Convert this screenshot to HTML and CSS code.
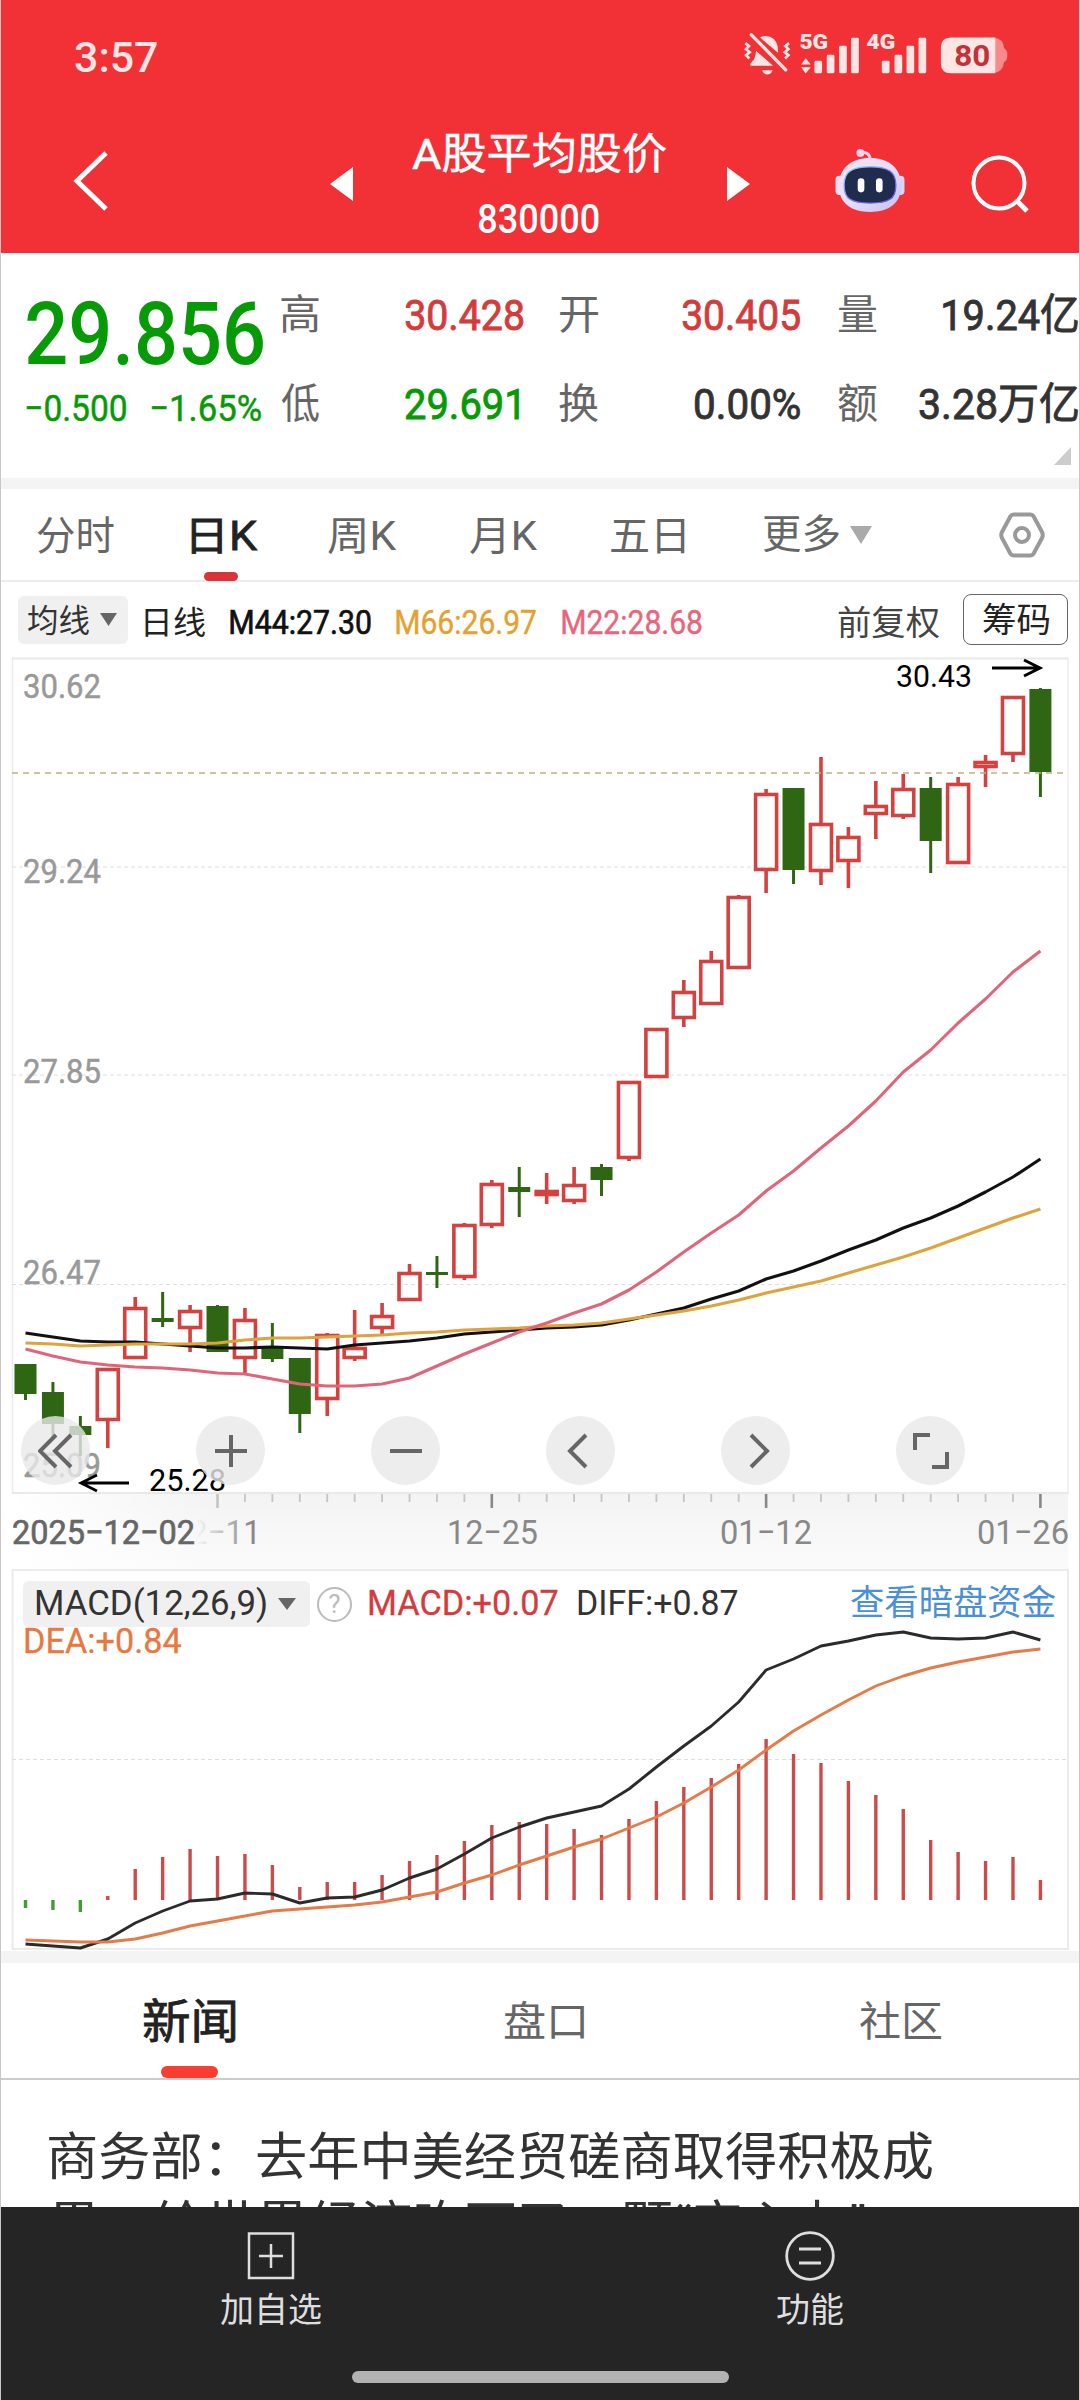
FILE: index.html
```html
<!DOCTYPE html>
<html lang="zh-CN">
<head>
<meta charset="utf-8">
<title>A股平均股价 830000</title>
<link rel="stylesheet" href="styles.css">
</head>
<body>
<div class="screen">
  <header class="header">
    <div class="status">
      <span class="clock fit" data-w="82">3:57</span>
      <svg class="status-icons" viewBox="70 30 800 140" width="267" height="47">
        <g fill="#ffe6e4">
          <path d="M106 118 Q112 106 112 92 L163 137 L98 137 Q93 137 95 131 Z"/>
          <path d="M124 52 Q138 44 154 50 Q178 60 178 92 L178 98 Z"/>
          <path d="M130 150 h32 q-6 13-16 13 t-16-13z"/>
        </g>
        <g fill="none" stroke="#ffe6e4" stroke-width="8">
          <path d="M98 44 L201 149" stroke-width="10" stroke-linecap="round"/>
          <path d="M80 69 l11 9 -9 9 11 9 -11 9 10 10M211 69 l-11 9 9 9 -11 9 11 9 -10 10"/>
        </g>
        <g fill="#ffe6e4">
          <text x="242" y="88" class="net" textLength="86" lengthAdjust="spacingAndGlyphs">5G</text>
          <text x="443" y="88" class="net" textLength="86" lengthAdjust="spacingAndGlyphs">4G</text>
          <path d="M247 133 L261 114 L276 133ZM247 141 L261 160 L276 141Z"/>
          <rect x="287" y="122" width="23" height="37" rx="4"/><rect x="324" y="104" width="23" height="55" rx="4"/>
          <rect x="361" y="77" width="23" height="82" rx="4"/><rect x="397" y="53" width="23" height="106" rx="4"/>
          <rect x="489" y="122" width="23" height="37" rx="4"/><rect x="527" y="104" width="23" height="55" rx="4"/>
          <rect x="563" y="77" width="23" height="82" rx="4"/><rect x="599" y="53" width="23" height="106" rx="4"/>
        </g>
        <path d="M822 52 Q853 54 855 84 Q865 88 865 105 Q865 122 855 126 Q851 158 822 159Z" fill="#f88a8a"/>
        <path d="M696 52 H829 V159 H696 Q666 159 666 129 V82 Q666 52 696 52Z" fill="#ffe6e4"/>
        <text x="706" y="137" class="batt" textLength="108" lengthAdjust="spacingAndGlyphs">80</text>
      </svg>
    </div>
    <div class="titlebar">
      <svg class="back" viewBox="0 0 38 64" width="38" height="64"><path d="M34 4 L5 32 L34 60" fill="none" stroke="#fff" stroke-width="5"/></svg>
      <svg class="prev" viewBox="0 0 23 34" width="23" height="34"><path d="M23 0V34L0 17Z" fill="#fff"/></svg>
      <div class="title">
        <span class="name fit" data-w="254">A股平均股价</span>
        <span class="code fit" data-w="120">830000</span>
      </div>
      <svg class="next" viewBox="0 0 23 34" width="23" height="34"><path d="M0 0V34L23 17Z" fill="#fff"/></svg>
      <svg class="robot" viewBox="345 386 210 196" width="70" height="65">
        <defs>
          <linearGradient id="shell" x1="0" y1="0" x2="1" y2="1"><stop offset="0" stop-color="#f3e4f4"/><stop offset=".5" stop-color="#e6defa"/><stop offset="1" stop-color="#c3c0f0"/></linearGradient>
          <linearGradient id="rim" x1="0" y1="0" x2="1" y2="1"><stop offset="0" stop-color="#7fe0ee"/><stop offset=".5" stop-color="#8478ee"/><stop offset="1" stop-color="#5c4fd8"/></linearGradient>
        </defs>
        <path d="M424 400 Q449 396 451 422" fill="none" stroke="#f6d3ea" stroke-width="9"/>
        <circle cx="421" cy="401" r="12" fill="#f6d3ea"/>
        <rect x="346" y="470" width="24" height="58" rx="12" fill="#efdff3"/><rect x="530" y="470" width="24" height="58" rx="12" fill="#d9d3f6"/>
        <path d="M450 416 C508 416 544 448 544 500 C544 552 508 579 450 579 C392 579 356 552 356 500 C356 448 392 416 450 416Z" fill="url(#shell)"/>
        <path d="M450 443 C506 443 528 458 528 498 C528 540 506 552 450 552 C394 552 372 540 372 498 C372 458 394 443 450 443Z" fill="#1f2c4d" stroke="url(#rim)" stroke-width="4"/>
        <rect x="413" y="477" width="20" height="43" rx="10" fill="#fff"/><rect x="468" y="477" width="20" height="43" rx="10" fill="#fff"/>
      </svg>
      <svg class="search" viewBox="0 0 58 58" width="58" height="58" fill="none" stroke="#fff" stroke-width="4"><circle cx="28" cy="28" r="25.5"/><path d="M45 45L56 56" stroke-width="5"/></svg>
    </div>
  </header>

  <section class="quote">
    <div class="last">
      <span class="price fit" data-w="236">29.856</span>
      <div class="change"><span class="fit" data-w="99">−0.500</span><span class="fit" data-w="109">−1.65%</span></div>
    </div>
    <div class="stats">
      <span class="lab fit" data-w="38">高</span><span class="val up fit" data-w="117">30.428</span>
      <span class="lab fit" data-w="38">开</span><span class="val up fit" data-w="117">30.405</span>
      <span class="lab fit" data-w="39">量</span><span class="val fit" data-w="135">19.24亿</span>
      <span class="lab fit" data-w="38">低</span><span class="val down low fit" data-w="114">29.691</span>
      <span class="lab fit" data-w="39">换</span><span class="val fit" data-w="105">0.00%</span>
      <span class="lab fit" data-w="39">额</span><span class="val fit" data-w="158">3.28万亿</span>
    </div>
    <i class="corner"></i>
  </section>

  <nav class="periods">
    <span class="fit" data-w="77">分时</span>
    <span class="active"><span class="fit" data-w="66">日K</span></span>
    <span class="fit" data-w="69">周K</span>
    <span class="fit" data-w="68">月K</span>
    <span class="fit" data-w="74">五日</span>
    <span class="more"><span class="fit" data-w="76">更多</span><svg viewBox="0 0 22 18" width="22" height="18"><path d="M0 0H22L11 18Z" fill="#aaa"/></svg></span>
    <svg class="gear" viewBox="0 0 46 46" width="46" height="46" fill="none" stroke="#999" stroke-width="4"><path d="M15 2.500H31Q33.500 2.500 34.700 4.500L43 20Q44.500 23 43 26L34.700 41.500Q33.500 43.500 31 43.500H15Q12.500 43.500 11.300 41.500L3 26Q1.500 23 3 20L11.300 4.500Q12.500 2.500 15 2.500Z"/><circle cx="23" cy="23" r="7"/></svg>
  </nav>

  <div class="legend">
    <span class="pill"><span class="fit" data-w="61">均线</span><svg viewBox="0 0 17 13" width="17" height="13"><path d="M0 0H17L8.500 13Z" fill="#666"/></svg></span>
    <span class="cjk dark fit" data-w="60">日线</span>
    <span class="m44 fit" data-w="141">M44:27.30</span>
    <span class="m66 fit" data-w="140">M66:26.97</span>
    <span class="m22 fit" data-w="140">M22:28.68</span>
    <span class="cjk adj fit" data-w="101">前复权</span>
    <span class="chip"><span class="fit" data-w="66">筹码</span></span>
  </div>

  <section class="kline">
    <svg id="kline" viewBox="0 657 1080 912" width="1080" height="912"></svg>
    <div class="tools">
      <button><svg viewBox="0 0 36 36"><path d="M18 2L2 18L18 34M33 2L17 18L33 34"/></svg></button>
      <button><svg viewBox="0 0 36 36"><path d="M18 2V34M2 18H34"/></svg></button>
      <button><svg viewBox="0 0 36 36"><path d="M2 18H34"/></svg></button>
      <button><svg viewBox="0 0 36 36"><path d="M23 2L7 18L23 34"/></svg></button>
      <button><svg viewBox="0 0 36 36"><path d="M13 2L29 18L13 34"/></svg></button>
      <button><svg viewBox="0 0 36 36"><path d="M2 17V2H17M34 19V34H19"/></svg></button>
    </div>
  </section>

  <section class="macd">
    <svg id="macd" viewBox="0 1569 1080 382" width="1080" height="382"></svg>
    <div class="macd-head">
      <span class="pill"><span class="fit" data-w="230">MACD(12,26,9)</span><svg viewBox="0 0 18 12" width="18" height="12"><path d="M0 0H18L9 12Z" fill="#666"/></svg></span>
      <span class="help">?</span>
      <span class="v-macd fit" data-w="189">MACD:+0.07</span>
      <span class="v-diff fit" data-w="160">DIFF:+0.87</span>
      <span class="link fit" data-w="205">查看暗盘资金</span>
    </div>
    <span class="v-dea fit" data-w="156">DEA:+0.84</span>
  </section>

  <nav class="sections">
    <span class="on"><span class="fit" data-w="92">新闻</span></span>
    <span><span class="fit" data-w="80">盘口</span></span>
    <span><span class="fit" data-w="82">社区</span></span>
  </nav>

  <article class="news">
    <p><span class="fit" data-w="883">商务部：去年中美经贸磋商取得积极成</span></p>
    <p><span class="fit" data-w="816">果，给世界经济吃下了一颗“定心丸”</span></p>
  </article>

  <footer class="dock">
    <div class="actions">
      <a><svg viewBox="0 0 50 50" width="50" height="50" fill="none" stroke="#dedede" stroke-width="2.500"><rect x="3" y="2.500" width="44" height="44.500"/><path d="M25 13V37M13 25H37"/></svg><span class="fit" data-w="101">加自选</span></a>
      <a><svg viewBox="0 0 50 50" width="50" height="50" fill="none" stroke="#dedede" stroke-width="2.800"><circle cx="25" cy="25" r="23.300"/><path d="M14 18H36M14 32H36"/></svg><span class="fit" data-w="66">功能</span></a>
    </div>
    <i class="home"></i>
  </footer>
</div>
<script src="app.js"></script>
</body>
</html>
```
FILE: styles.css
```css
* { box-sizing: border-box; }
body { margin: 0; background: #fff; font-family: Roboto, "Noto Sans CJK SC", sans-serif; color: #333; }
svg { display: block; flex: none; }
.screen { width: 1080px; height: 2400px; overflow: hidden; display: flex; flex-direction: column; border-left: 1px solid #c8c8c8; border-right: 1px solid #c8c8c8; }
.screen > * { margin-left: -1px; margin-right: -1px; flex: none; }
.fit { display: block; white-space: nowrap; flex: none; }
.fit > span { display: inline-block; transform-origin: 0 50%; }

.header { height: 253px; background: #f13135; color: #fff; }
.status { height: 114px; padding: 0 71px 0 75px; display: flex; align-items: center; justify-content: space-between; }
.clock { font-size: 43px; font-weight: 500; line-height: 50px; color: #ffe6e4; }
.status-icons { margin-top: -7px; }
.net { font: 900 61px Roboto, sans-serif; }
.batt { font: 700 87px Roboto, sans-serif; fill: #c23238; }
.titlebar { height: 139px; display: flex; align-items: flex-start; }
.back { margin: 35px 0 0 72px; }
.prev { margin: 53px 0 0 220px; }
.title { width: 254px; margin: 12px 0 0 59px; display: flex; flex-direction: column; align-items: center; }
.name { font-size: 43px; line-height: 56px; -webkit-text-stroke: .5px; }
.code { font-size: 41px; line-height: 50px; font-weight: 500; margin-top: 12px; }
.next { margin: 53px 0 0 61px; }
.robot { margin: 34px 0 0 85px; }
.search { margin: 41px 0 0 66px; }

.quote { height: 225px; display: flex; position: relative; }
.last { width: 281px; padding: 35px 0 0 27px; color: #069a06; }
.price { font-size: 87px; line-height: 92px; font-weight: 500; }
.change { display: flex; gap: 26px; margin-top: 9px; font-size: 37px; line-height: 40px; -webkit-text-stroke: .5px; }
.stats { flex: 1; height: 180px; padding: 17px 2px 0 0; display: grid; grid-template-columns: 38px 204px 75px 202px 77px 1fr; grid-auto-rows: 89px; align-items: center; }
.lab { font-size: 41px; line-height: 44px; color: #666; justify-self: end; }
.val { font-size: 43px; line-height: 46px; justify-self: end; -webkit-text-stroke: .9px; }
.low { margin-right: 4px; }
.up { color: #d43c3c; }
.down { color: #069a06; }
.corner { position: absolute; right: 9px; top: 194px; border-left: 17px solid transparent; border-bottom: 18px solid #ccc; }

.periods { height: 104px; border-top: 11px solid #f4f4f4; border-bottom: 2px solid #ececec; display: grid; grid-template-columns: 155px 136px 142px 141px 152px 236px 1fr; padding-left: 37px; align-items: center; font-size: 40px; line-height: 95px; color: #666; }
.periods > * { max-height: 91px; }
.active { position: relative; height: 91px; color: #222; -webkit-text-stroke: .8px; }
.active::after { content: ""; position: absolute; left: 12px; bottom: -1px; width: 34px; height: 9px; border-radius: 5px; background: #db3438; }
.more { display: flex; align-items: center; gap: 11px; }

.legend { height: 75px; display: flex; align-items: center; padding: 0 12px 0 18px; font-size: 34px; line-height: 48px; }
.pill { background: #f0f0f0; border-radius: 6px; display: flex; align-items: center; color: #333; }
.legend .pill { width: 110px; height: 48px; padding-left: 10px; gap: 11px; font-size: 32px; }
.legend .pill .fit { position: relative; top: 1px; }
.legend > .cjk { font-size: 32px; margin-top: 6px; }
.legend > .dark { color: #222; margin-left: 17px; }
.m44 { margin: 4px 0 0 25px; color: #111; -webkit-text-stroke: .7px; }
.m66 { margin: 4px 0 0 25px; color: #e3a22f; -webkit-text-stroke: .4px; }
.m22 { margin: 4px 0 0 26px; color: #e8657b; -webkit-text-stroke: .4px; }
.legend > .adj { margin-left: auto; font-size: 34px; color: #444; }
.chip { width: 105px; height: 51px; margin-left: 24px; border: 1.500px solid #666; border-radius: 8px; display: flex; justify-content: center; align-items: center; font-size: 34px; color: #222; }

.kline { height: 912px; position: relative; }
.tools { position: absolute; left: 21px; top: 759px; display: flex; gap: 106px; }
.tools button { width: 69px; height: 69px; padding: 0; border: 0; border-radius: 50%; background: rgba(232,232,232,.8); display: grid; place-items: center; }
.tools svg { width: 36px; height: 36px; fill: none; stroke: #666; stroke-width: 4; }

.macd { height: 382px; position: relative; padding-top: 12px; }
.macd > svg { position: absolute; left: 0; top: 0; }
.macd-head { position: relative; height: 46px; display: flex; align-items: center; padding: 0 24px 0 23px; font-size: 35px; line-height: 46px; }
.macd .pill { width: 287px; height: 46px; padding-left: 13px; gap: 12px; }
.help { width: 35px; height: 35px; margin-left: 7px; border: 2.500px solid #bbb; border-radius: 50%; font-size: 26px; line-height: 31px; text-align: center; color: #bbb; }
.v-macd { margin-left: 17px; color: #d43c3c; -webkit-text-stroke: .3px; }
.v-diff { margin-left: 20px; color: #333; }
.link { margin-left: auto; font-size: 35px; color: #4a90d9; }
.v-dea { position: relative; margin: -8px 0 0 25px; font-size: 35px; line-height: 46px; color: #e8783f; -webkit-text-stroke: .3px; }

.sections { height: 129px; border-top: 12px solid #f4f4f4; border-bottom: 2px solid #ccc; display: grid; grid-template-columns: 378px 332px 1fr; font-size: 41px; line-height: 118px; color: #666; }
.sections > span { display: flex; justify-content: center; height: 115px; }
.sections > span:last-child { padding-left: 12px; }
.on { position: relative; color: #222; font-size: 47px; -webkit-text-stroke: .8px; }
.on::after { content: ""; position: absolute; left: 161px; bottom: 0; width: 57px; height: 12px; border-radius: 6px; background: #f93d32; }

.news { height: 127px; overflow: hidden; padding: 44px 0 0 49px; font-size: 51px; line-height: 68px; }
.news p { margin: 0; }

.dock { height: 193px; background: #252525; color: #dedede; display: flex; flex-direction: column; align-items: center; }
.actions { width: 1078px; height: 164px; display: grid; grid-template-columns: 1fr 1fr; }
.actions a { display: flex; flex-direction: column; align-items: center; padding-top: 24px; gap: 8px; font-size: 34px; line-height: 42px; }
.home { width: 377px; height: 12px; border-radius: 6px; background: #b2b2b2; }

.axis { font: 400 34px Roboto, sans-serif; fill: #999; stroke: #999; stroke-width: .5; }
.peak { font: 400 31px Roboto, sans-serif; fill: #000; }
.date { font: 400 34px Roboto, sans-serif; fill: #888; }
.date.first { fill: #666; stroke: #666; stroke-width: .7; }
```
FILE: app.js
```js
// Condense each numeral or label to its measured width, as the app's DIN face does.
const pen = document.createElement('canvas').getContext('2d');
document.querySelectorAll('.fit').forEach(el => {
  const text = el.textContent, cs = getComputedStyle(el), w = +el.dataset.w;
  pen.font = `${cs.fontWeight} ${cs.fontSize} ${cs.fontFamily}`;
  const m = pen.measureText(text);
  const k = w / (m.actualBoundingBoxLeft + m.actualBoundingBoxRight);
  el.innerHTML = '';
  const inner = document.createElement('span');
  inner.textContent = text;
  inner.style.transform = `translateX(${m.actualBoundingBoxLeft * k}px) scaleX(${k})`;
  el.style.width = w + 'px';
  el.append(inner);
});

const X = i => 25.5 + 27.43 * i;
const line = (ys, color, w) => `<polyline points="${ys.map((y, i) => X(i).toFixed(1) + ',' + y).join(' ')}" fill="none" stroke="${color}" stroke-width="${w}" stroke-linejoin="round"/>`;
const label = (cls, x, y, w, t, extra = '') => `<text class="${cls}" x="${x}" y="${y}" textLength="${w}" lengthAdjust="spacingAndGlyphs" ${extra}>${t}</text>`;

// colour, high, body top, body bottom, low
const candles = [
  ['g',1364,1364,1394,1400],['g',1382,1392,1424,1437],['g',1416,1426,1435,1456],['r',1368,1368,1421,1448],
  ['r',1297,1307,1359,1359],['g',1292,1318,1322,1327],['r',1305,1310,1329,1352],['g',1305,1306,1352,1352],
  ['r',1308,1319,1359,1373],['g',1323,1347,1359,1362],['g',1358,1358,1414,1433],['r',1333,1334,1400,1416],
  ['r',1310,1347,1359,1361],['r',1303,1315,1329,1335],['r',1264,1272,1301,1301],['g',1256,1272,1275,1288],
  ['r',1223,1224,1278,1280],['r',1180,1183,1226,1228],['g',1167,1187,1192,1217],['r',1173,1190,1196,1204],
  ['r',1167,1184,1202,1204],['g',1164,1167,1180,1196],['r',1081,1081,1159,1161],['r',1028,1028,1078,1078],
  ['r',980,991,1019,1027],['r',951,960,1005,1005],['r',895,896,969,969],['r',789,793,871,893],
  ['g',788,788,870,884],['r',757,823,872,885],['r',827,836,862,888],['r',781,805,815,839],
  ['r',774,788,817,819],['g',777,788,841,873],['r',777,783,864,864],['r',755,761,768,787],
  ['r',696,696,755,762],['g',688,689,772,797]];
const ma44 = [1333,1337,1341,1342,1342,1344,1346,1348,1348,1347,1348,1349,1345,1343,1341,1338,1334,1332,1330,1328,1327,1325,1320,1314,1308,1299,1291,1279,1271,1261,1250,1240,1228,1218,1206,1192,1177,1159];
const ma66 = [1343,1344,1346,1345,1344,1344,1344,1343,1340,1338,1338,1337,1336,1335,1333,1332,1330,1329,1328,1326,1325,1323,1319,1315,1311,1306,1300,1293,1287,1281,1273,1265,1257,1248,1238,1228,1218,1209];
const ma22 = [1349,1356,1362,1365,1367,1368,1370,1373,1374,1379,1384,1386,1386,1384,1378,1366,1354,1343,1332,1323,1313,1304,1290,1272,1252,1233,1215,1191,1171,1148,1126,1101,1072,1050,1023,999,972,951];

let k = `<defs>
<linearGradient id="band" x1="0" y1="0" x2="0" y2="1"><stop offset="0" stop-color="#f3f3f3"/><stop offset="1" stop-color="#fbfbfb"/></linearGradient>
<linearGradient id="left" x1="0" y1="0" x2="1" y2="0"><stop offset="0" stop-color="#fff"/><stop offset="1" stop-color="#fff" stop-opacity="0"/></linearGradient>
<linearGradient id="fade" gradientUnits="userSpaceOnUse" x1="196" y1="0" x2="252" y2="0"><stop offset="0" stop-color="#888" stop-opacity="0"/><stop offset="1" stop-color="#888"/></linearGradient></defs>
<rect x="12" y="1494" width="1056" height="75" fill="url(#band)"/><rect x="12" y="1494" width="200" height="75" fill="url(#left)"/>
<path d="M12.500 658V1494M1068 658V1494" stroke="#ebebeb" stroke-width="1.500"/><path d="M12 658.500H1068M12 1493H1068" stroke="#e9e9e9" stroke-width="2"/>`;
[867, 1075, 1284.5].forEach(y => k += `<path d="M12 ${y}H1068" stroke="#dedede" stroke-dasharray="4 3"/>`);
[['30.62',698],['29.24',883],['27.85',1083],['26.47',1284],['25.09',1477]].forEach(([t, y]) => k += label('axis', 23, y, 78, t));
candles.forEach(([c, hi, top, bot, lo], i) => {
  const x = X(i);
  if (c === 'g') {
    k += `<path d="M${x} ${hi}V${lo}" stroke="#2f6614" stroke-width="3"/><rect x="${x - 11}" y="${top}" width="22" height="${bot - top}" fill="#2f6614"/>`;
  } else {
    k += `<path d="M${x} ${hi}V${top + 1}M${x} ${bot - 1}V${lo}" stroke="#d4413f" stroke-width="3.600"/><rect x="${x - 10.500}" y="${top + 1.500}" width="21" height="${bot - top - 3}" fill="none" stroke="#d4413f" stroke-width="3.600"/>`;
  }
});
k += `<path d="M12 773H1068" stroke="#bfb184" stroke-width="1.500" stroke-dasharray="6 5"/>`;
k += line(ma44, '#111', 3.1) + line(ma66, '#dfa33d', 3.1) + line(ma22, '#e0657a', 3.1);
k += label('peak', 896, 687, 76, '30.43') + '<path d="M992 668H1040M1024 660L1040 668L1024 676" fill="none" stroke="#000" stroke-width="3"/>';
k += label('peak', 149, 1491, 77, '25.28') + '<path d="M129 1483H81M97 1475L81 1483L97 1491" fill="none" stroke="#000" stroke-width="2.800"/>';
for (let i = 7; i < 38; i++) {
  const big = i % 10 === 7;
  k += `<path d="M${X(i)} 1494V${big ? 1508 : 1502}" stroke="${big && i > 7 ? '#888' : '#c4c4c4'}" stroke-width="${big ? 2.6 : 1.8}"/>`;
}
k += label('date', 172, 1544, 89, '12−11', 'style="fill:url(#fade)"') + label('date first', 12, 1544, 183, '2025−12−02');
k += label('date', 447, 1544, 91, '12−25') + label('date', 720, 1544, 92, '01−12') + label('date', 977, 1544, 92, '01−26');
document.getElementById('kline').innerHTML = k;

const bars = [1908,1910,1912,1896,1869,1857,1849,1856,1854,1865,1887,1882,1882,1875,1861,1855,1841,1825,1822,1824,1829,1835,1819,1801,1787,1778,1764,1739,1754,1763,1781,1795,1809,1840,1852,1861,1857,1880];
const diff = [1944,1946,1948,1939,1923,1911,1901,1899,1893,1894,1903,1898,1897,1890,1878,1869,1854,1838,1827,1818,1812,1806,1789,1767,1746,1726,1702,1670,1659,1646,1641,1635,1632,1638,1639,1638,1632,1640];
const dea = [1940,1941,1942,1942,1939,1933,1926,1921,1916,1911,1909,1907,1905,1902,1897,1892,1883,1875,1865,1856,1847,1839,1828,1817,1803,1787,1770,1750,1731,1715,1700,1686,1676,1668,1662,1657,1652,1649];
let m = '<rect x="12.500" y="1570" width="1055.500" height="379" fill="none" stroke="#e9e9e9" stroke-width="1.800"/><path d="M12 1759.500H1068" stroke="#dedede" stroke-dasharray="4 3"/>';
bars.forEach((y, i) => m += `<path d="M${X(i)} 1900V${y}" stroke="${y > 1900 ? '#459a38' : '#cb4b4b'}" stroke-width="3.400"/>`);
m += line(diff, '#2b2b2b', 2.9) + line(dea, '#e57b48', 2.9);
document.getElementById('macd').innerHTML = m;
```
